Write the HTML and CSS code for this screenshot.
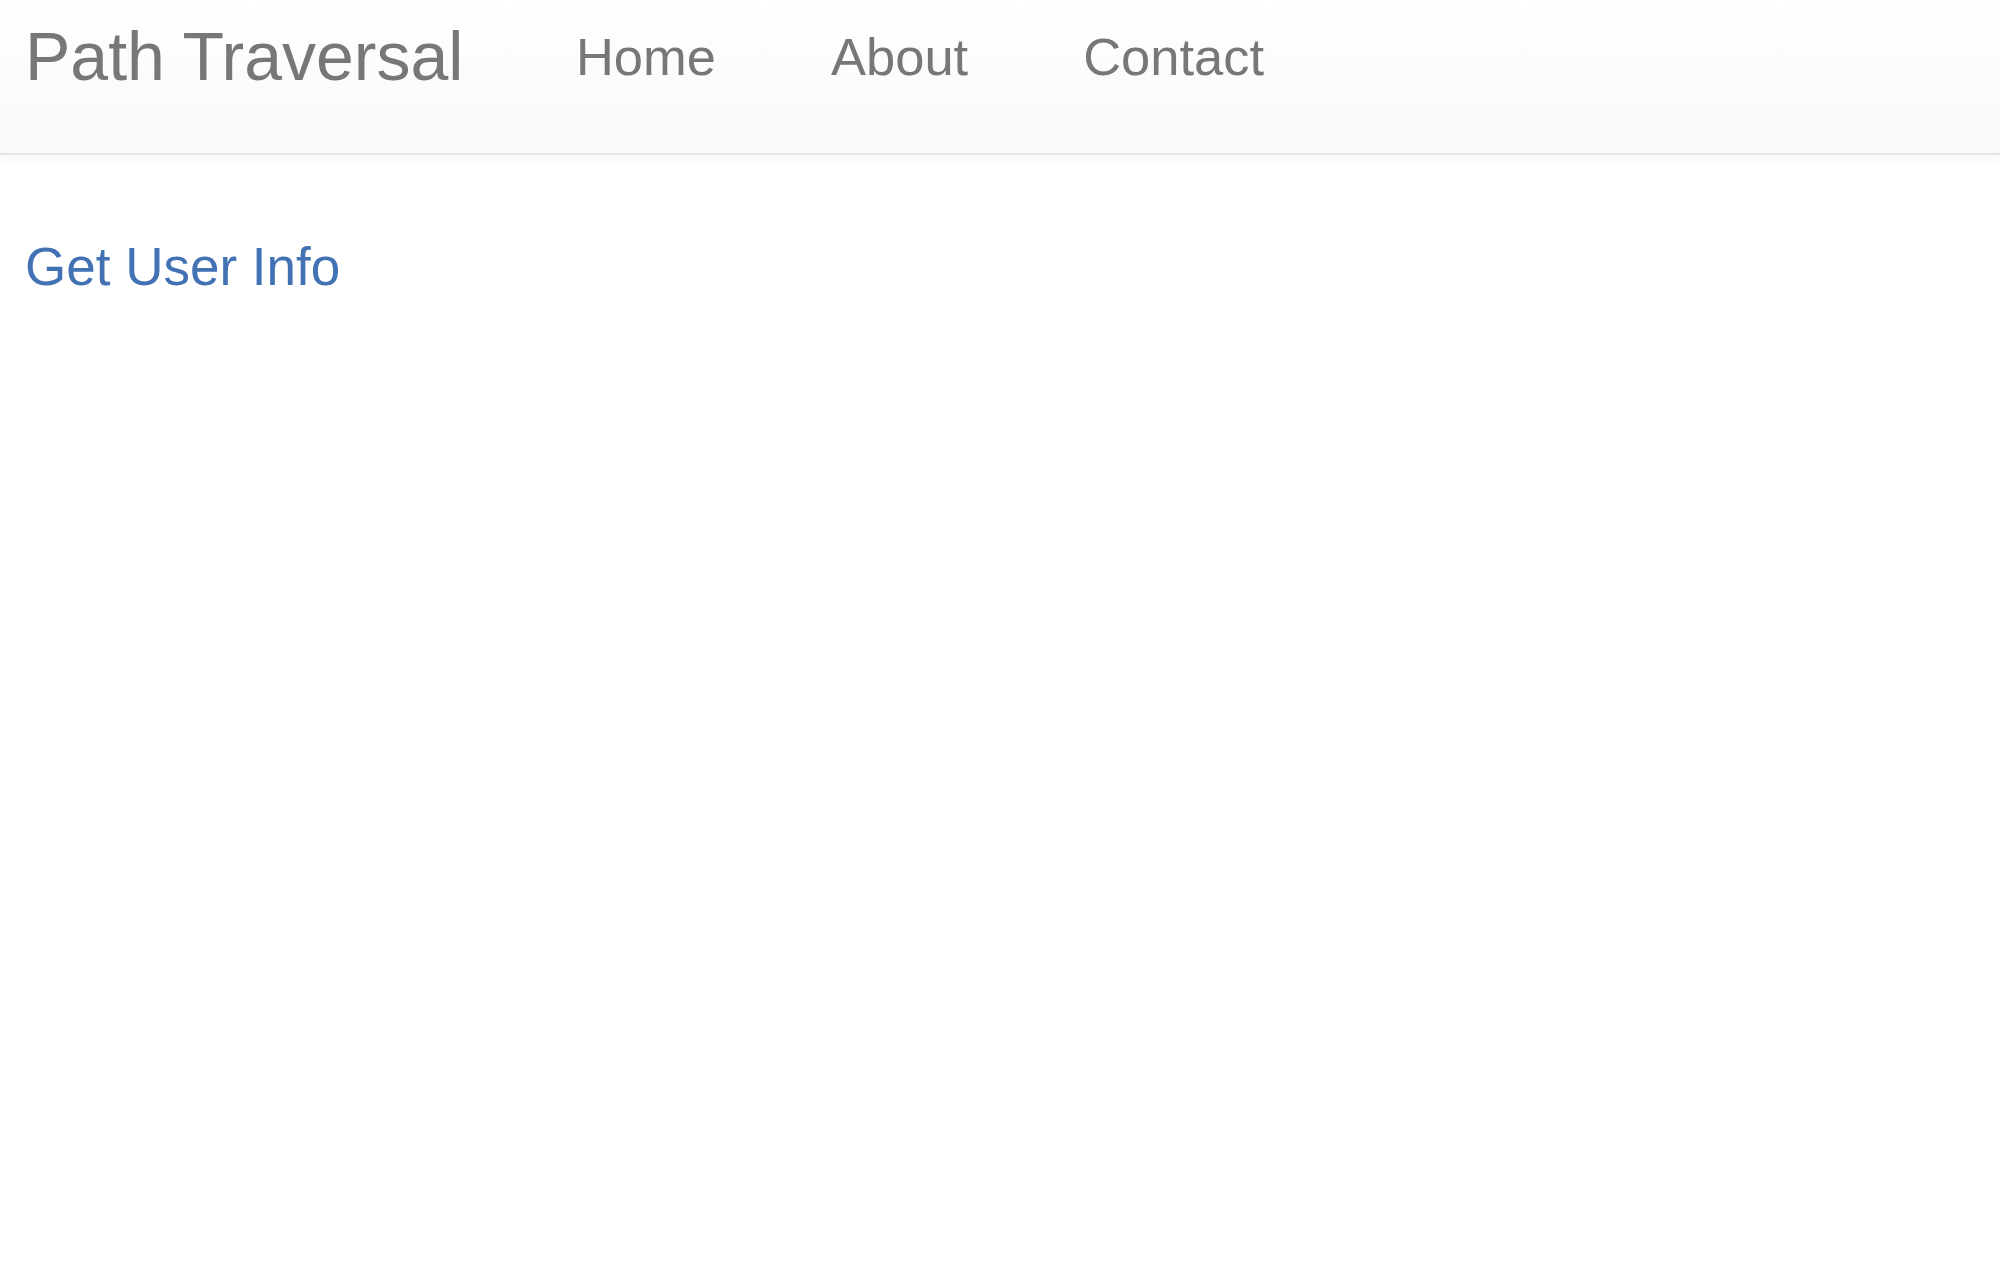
FILE: index.html
```html
<!DOCTYPE html>
<html lang="en">
<head>
<meta charset="utf-8">
<title>Path Traversal</title>
<link rel="stylesheet" href="styles.css">
</head>
<body>
<nav class="navbar">
  <a class="brand" href="#">Path Traversal</a>
  <ul class="nav">
    <li><a href="#">Home</a></li>
    <li><a href="#">About</a></li>
    <li><a href="#">Contact</a></li>
  </ul>
</nav>
<main class="content">
  <a class="info-link" href="#">Get User Info</a>
</main>
</body>
</html>
```
FILE: styles.css
```css
html, body {
  margin: 0;
  padding: 0;
  background: #fff;
  font-family: "Liberation Sans", Arial, sans-serif;
}

.navbar {
  display: flex;
  align-items: flex-start;
  height: 153px;
  padding: 0 0 0 25px;
  background: linear-gradient(to bottom, #ffffff 0%, #f8f8f8 100%);
  border-bottom: 2px solid #e6e6e6;
  box-shadow: 0 2px 14px rgba(0, 0, 0, 0.06);
  box-sizing: content-box;
}

.brand {
  display: block;
  padding: 22px 55px 0 0;
  font-size: 68px;
  line-height: 68px;
  color: #777;
  text-decoration: none;
}

.nav {
  display: flex;
  margin: 0;
  padding: 0;
  list-style: none;
}

.nav a {
  display: block;
  padding: 31px 57.5px 0;
  font-size: 52.5px;
  line-height: 52.5px;
  color: #777;
  text-decoration: none;
}

.content {
  padding: 85px 25px 0;
}

.info-link {
  font-size: 53px;
  line-height: 53px;
  color: #4272b4;
  text-decoration: none;
}
```
